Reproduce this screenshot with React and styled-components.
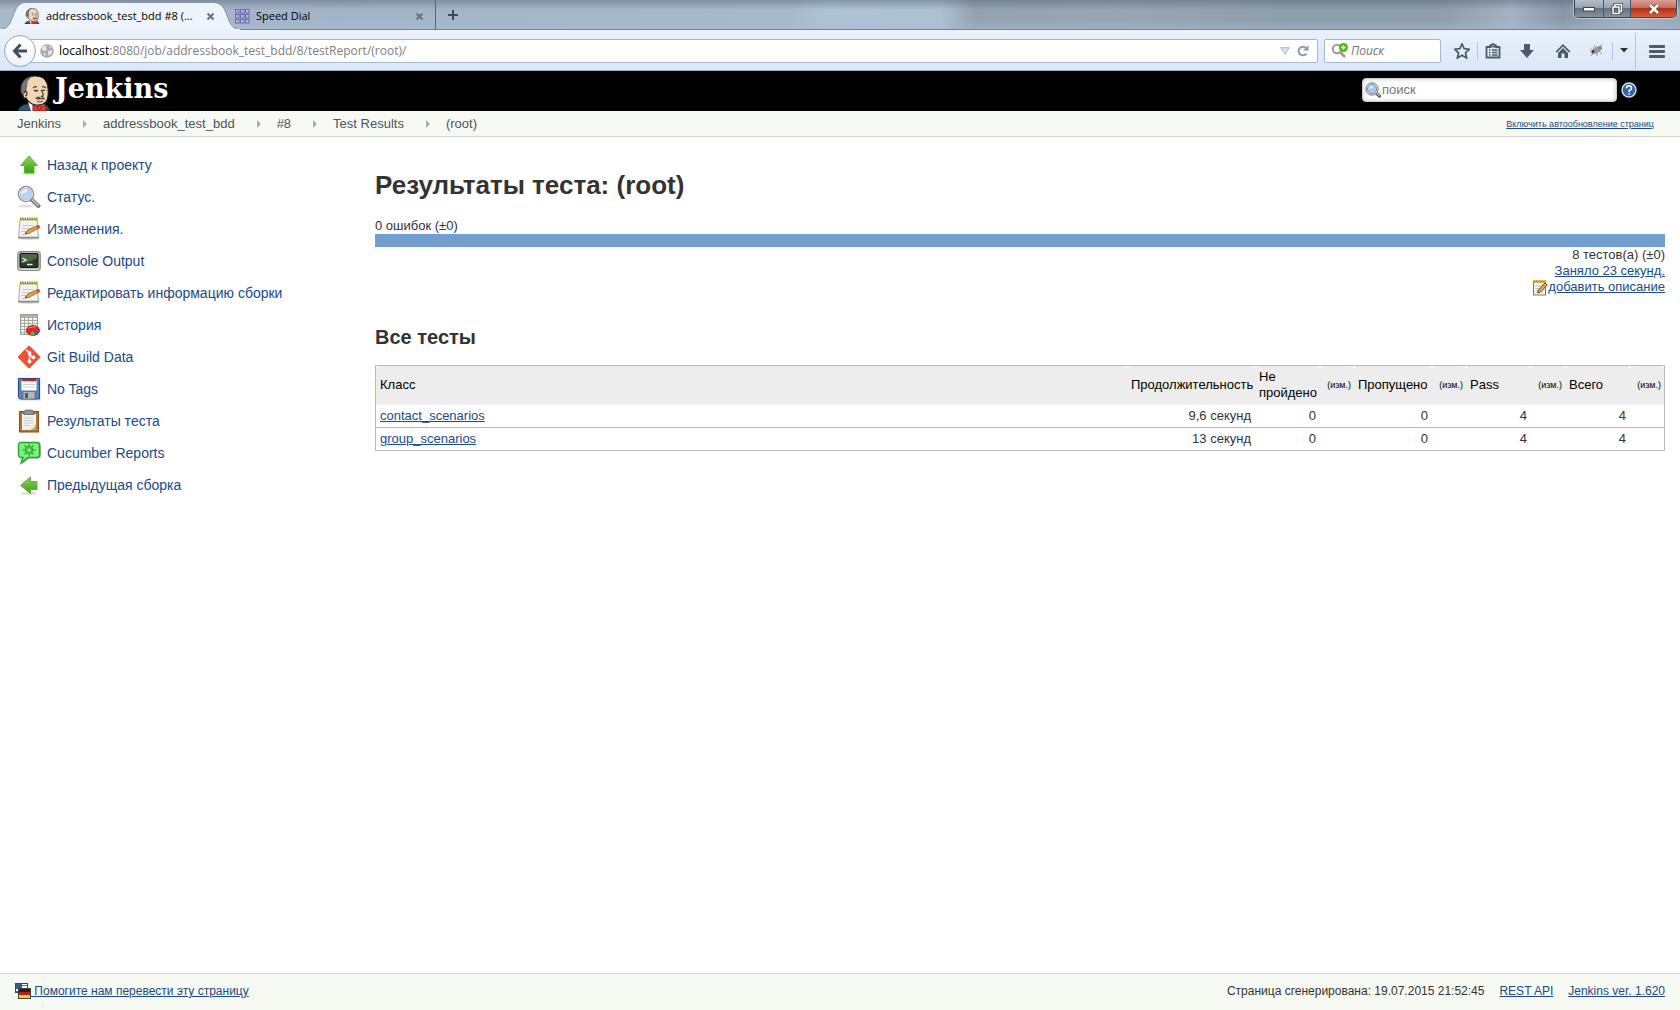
import React from 'react';
import styled, { createGlobalStyle } from 'styled-components';

const sans = '"Liberation Sans", Arial, sans-serif';
const ui = '"Open Sans", "Segoe UI", sans-serif';

const Global = createGlobalStyle`
  * { box-sizing: border-box; }
  body { margin: 0; background: #fff; color: #333; font: 12px/16px ${sans}; }
  button, input { font: inherit; }
`;

const Page = styled.div`
  min-height: 100vh;
  display: flex;
  flex-direction: column;
`;

/* ---------- browser window ---------- */
const TabStrip = styled.div`
  display: flex;
  height: 30px;
  border-bottom: 1px solid #6f8598;
  background:
    linear-gradient(180deg, rgba(70, 85, 100, 0.4) 0, rgba(120, 140, 160, 0) 10px, rgba(165, 188, 208, 0) 20px, rgba(165, 188, 208, 0.5) 30px),
    linear-gradient(90deg, #a9b9cb 0, #a3b4c8 20%, #a6b7ca 35%, #a7b9cd 47%, #afc2d5 49%, #adc1d4 56%, #93a2b1 58%, #97a6b5 66%, #8e9fae 76%, #8f9fae 86%, #a3b3c3 90%, #8998a8 93%, #a2b2c2 97%, #97a8b9 100%);
`;

const Tab = styled.div`
  position: relative;
  display: flex;
  align-items: center;
  gap: 6px;
  height: 30px;
  width: ${p => (p.$active ? '234px' : '202px')};
  padding: 2px ${p => (p.$active ? '16px 0 24px' : '8px 0 1px')};
  border-right: ${p => (p.$active ? '0' : '1px solid #54667a')};
  color: #000;
  font: 11px/16px ${ui};
  white-space: nowrap;
  & > * { position: relative; flex: none; }
`;

const TabTitle = styled.span`
  && { flex: 1; }
`;

const TabShape = styled.svg`
  && { position: absolute; left: 0; top: 0; }
`;

const PlainButton = styled.button`
  display: flex;
  align-items: center;
  justify-content: center;
  flex: none;
  width: ${p => p.$w || 16}px;
  height: ${p => p.$h || 16}px;
  padding: 0;
  border: 0;
  background: none;
`;

const WindowButtons = styled.div`
  display: flex;
  align-self: flex-start;
  margin-left: auto;
  margin-right: 3px;
  height: 18px;
  border: 1px solid #3c4650;
  border-top: 0;
  border-radius: 0 0 5px 5px;
  overflow: hidden;
  box-shadow: 0 0 0 1px rgba(255, 255, 255, 0.4);
`;

const WindowButton = styled(PlainButton)`
  height: 17px;
  background: ${p => (p.$close
    ? 'linear-gradient(#d9a196 0, #c4705f 45%, #b3301a 50%, #d5603f 100%)'
    : 'linear-gradient(#b5bec8 0, #97a3af 45%, #66727e 50%, #8793a0 100%)')};
  & + & { border-left: 1px solid #4a545e; }
`;

const NavBar = styled.div`
  display: flex;
  align-items: center;
  height: 41px;
  padding: 1px 2px 0 4px;
  border-bottom: 1px solid #9bb0c6;
  background: linear-gradient(#eaf1fb, #d9e7f8);
`;

const BackButton = styled(PlainButton)`
  position: relative;
  margin-right: -8px;
  border: 1px solid #92a8be;
  border-radius: 50%;
  background: linear-gradient(#fff, #eef4fb);
`;

const UrlBox = styled.div`
  display: flex;
  align-items: center;
  flex: 1;
  gap: 5px;
  height: 24px;
  padding: 0 6px 0 11px;
  border: 1px solid #a5b9cd;
  border-radius: 2px;
  background: #fff;
  color: #808080;
  font: 12px/16px ${ui};
  white-space: nowrap;
`;

const Address = styled.span`
  flex: 1;
  b { font-weight: 400; color: #000; }
`;

const BrowserSearch = styled.label`
  display: flex;
  align-items: center;
  gap: 2px;
  width: 117px;
  height: 24px;
  margin: 0 12px 0 6px;
  padding: 0 6px;
  border: 1px solid #a5b9cd;
  border-radius: 2px;
  background: #fff;
  input {
    min-width: 0;
    flex: 1;
    padding: 0;
    border: 0;
    outline: 0;
    background: none;
    font: italic 12px/16px ${ui};
  }
  input::placeholder { color: #757575; opacity: 1; }
`;

const Tools = styled.div`
  display: flex;
  align-items: center;
`;

const ToolSep = styled.span`
  width: 1px;
  height: ${p => (p.$tall ? 36 : 18)}px;
  margin-left: ${p => (p.$gap ? 6 : 0)}px;
  background: #b3c5d8;
`;

/* ---------- Jenkins header ---------- */
const Header = styled.header`
  display: flex;
  align-items: center;
  height: 40px;
  padding: 0 43px 2px 18px;
  background: #000;
`;

const Brand = styled.a`
  display: flex;
  align-items: center;
  gap: 5px;
  height: 40px;
  margin-bottom: -2px;
  color: #fff;
  font: bold 27px/32px "DejaVu Serif", Georgia, serif;
  text-decoration: none;
  svg { align-self: flex-end; }
  span { padding-bottom: 4px; }
`;

const SearchBox = styled.label`
  display: flex;
  align-items: center;
  width: 255px;
  height: 24px;
  margin: 0 4px 0 auto;
  padding: 0 2px;
  border: 1px solid #ccc;
  border-radius: 4px;
  background: #fff;
  box-shadow: inset 0 0 5px #ccc;
  input {
    min-width: 0;
    flex: 1;
    padding: 0;
    border: 0;
    outline: 0;
    background: none;
    font: 13px/16px ${sans};
  }
  input::placeholder { color: #757575; opacity: 1; }
`;

const Crumbs = styled.nav`
  display: flex;
  align-items: center;
  height: 26px;
  padding: 1px 26px 0 17px;
  border-bottom: 1px solid #d3d7cf;
  background: #f6faf2;
  font-size: 13px;
  a { color: #4d545d; text-decoration: none; }
`;

const CrumbArrow = styled.span`
  margin: 0 16px 0 22px;
  border: 4px solid transparent;
  border-right-width: 0;
  border-left-color: #aaa;
`;

const RefreshLink = styled.span`
  margin-left: auto;
  font-size: 9px;
  && a { color: #204a87; text-decoration: underline; }
`;

/* ---------- content ---------- */
const Body = styled.div`
  display: flex;
  flex: 1;
`;

const Side = styled.nav`
  display: flex;
  flex-direction: column;
  gap: 8px;
  flex: none;
  width: 375px;
  padding: 16px 17px;
`;

const Task = styled.a`
  display: flex;
  align-items: center;
  gap: 6px;
  height: 24px;
  color: #204a87;
  font-size: 14px;
  text-decoration: none;
`;

const Main = styled.main`
  flex: 1;
  padding: 32px 15px 32px 0;
  font-size: 13px;
`;

const Title = styled.h1`
  margin: 0 0 17px;
  font: bold 26px/32px ${sans};
`;

const Subtitle = styled.h2`
  margin: 30px 0 16px;
  font: bold 20px/24px ${sans};
`;

const Bar = styled.div`
  height: 13px;
  background: #729fcf;
`;

const Summary = styled.div`
  display: flex;
  flex-direction: column;
  align-items: flex-end;
`;

const Link = styled.a`
  color: #204a87;
`;

const Describe = styled.span`
  display: flex;
  align-items: center;
  height: 16px;
  svg { position: relative; top: 1px; }
`;

const Results = styled.table`
  width: 100%;
  border: 1px solid #bbb;
  border-collapse: separate;
  border-spacing: 0;
  table-layout: fixed;
  th, td { padding: 3px 4px; text-align: left; }
  th {
    height: 39px;
    border-bottom: 1px solid #f6f6f6;
    border-radius: 4px 4px 0 0;
    background: #ededed;
    color: #000;
    font-weight: 400;
  }
  td { height: 22px; }
  tr + tr td { height: 23px; border-top: 1px solid #bbb; }
`;

const Col = styled.col`
  width: ${p => (p.$w ? `${p.$w}px` : 'auto')};
`;

const Head = styled.th`
  && {
    padding: 3px ${p => (p.$small ? 3 : 4)}px;
    text-align: ${p => (p.$right ? 'right' : 'left')};
    font-size: ${p => (p.$small ? 9 : 13)}px;
    white-space: ${p => (p.$wrap ? 'normal' : 'nowrap')};
  }
`;

const Num = styled.td`
  && { text-align: right; }
`;

const Footer = styled.footer`
  display: flex;
  align-items: center;
  gap: 15px;
  height: 37px;
  padding: 0 15px 2px;
  border-top: 1px solid #d3d7cf;
  background: #f6faf2;
`;

const Translate = styled(Link)`
  display: flex;
  align-items: center;
  margin-right: auto;
  white-space: pre;
`;

/* ---------- drawings ---------- */
const Butler = ({ w, h }) => (
  <svg width={w} height={h} viewBox="0 0 32 36">
    <path d="M0 36 L1 33 Q5 29 10 29 L24 29 Q31 30 32 36Z" fill="#31586e" stroke="#182a35" />
    <path d="M10 27 L13 36 H27 L26 28Z" fill="#fff" />
    <path d="M5 20 Q2 19 3 13 Q5 1 17 1 Q29 1 30 13 Q31 23 28 27 Q24 31 18 30 Q11 29 8 23 Q5 24 5 20Z" fill="#f0d6b7" stroke="#231f20" strokeWidth="1.2" />
    <path d="M3 15 Q2 5 13 1.500 Q8 6 8.500 10 Q9.500 11 8 13 Q8.500 15 7 18 L4 19Z" fill="#777577" stroke="#333" strokeWidth=".6" />
    <path d="M6 17 Q8.500 15 9 18 Q9 21 7 21 M15 13 q2-2 4 -1 M24 12 q2-1 4 1 M16 15 q2 2 4 0 M24 15 q2 1 3 0 M23 15 q3 4 2 6 q-1 1-2 0" fill="none" stroke="#49352b" strokeWidth="1.200" />
    <path d="M17 23 q4-3 6 0 q3-2 4 1 q-2 1-4 0 q-3 2-6-1Z" fill="#5b524b" />
    <path d="M19 26 q3 2 6 0" fill="none" stroke="#8c3b2c" />
    <path d="M15 30 L21 32 L28 30 V36 H15Z" fill="#e03a35" stroke="#861c18" />
    <circle cx="21.500" cy="33" r="2" fill="#ef3d3a" stroke="#861c18" strokeWidth=".8" />
  </svg>
);

const Glass = ({ s = 24 }) => (
  <svg width={s} height={s} viewBox="0 0 24 24">
    <ellipse cx="9" cy="21" rx="8" ry="1.6" fill="#000" opacity=".12" />
    <path d="M14 14 L21.500 21" stroke="#777" strokeWidth="4" strokeLinecap="round" />
    <path d="M15 14.500 L21 20.200" stroke="#c8c8c8" strokeWidth="1.600" strokeLinecap="round" />
    <circle cx="9" cy="9" r="7.200" fill="#b9d3f2" stroke="#8c8f8c" strokeWidth="2.200" />
    <circle cx="9" cy="9" r="6.500" fill="none" stroke="#eee" strokeWidth="1" />
    <path d="M4 9 Q5 4 10 4 Q12 7 4 9Z" fill="#e8f2fd" />
  </svg>
);

const SmallGlass = () => (
  <svg width="17" height="16" viewBox="0 0 17 16">
    <path d="M11 11 L14.500 14" stroke="#666" strokeWidth="3.500" strokeLinecap="round" />
    <path d="M11.500 11 L14.500 13.500" stroke="#bbb" strokeWidth="1.200" strokeLinecap="round" />
    <circle cx="7" cy="7" r="6.200" fill="#eee" stroke="#777" />
    <circle cx="7" cy="7" r="4.600" fill="#a9c8ef" stroke="#6f93c4" />
    <path d="M3.500 7 Q4 3.500 8 3.500 Q9 6 3.500 7Z" fill="#e3effc" />
  </svg>
);

const Arrow = ({ left }) => (
  <svg width="24" height="24" viewBox="0 0 24 24">
    <defs>
      <linearGradient id={left ? 'gl' : 'gu'} x1="0" y1="0" x2="0" y2="1">
        <stop offset="0" stopColor="#8fd35c" /><stop offset="1" stopColor="#3f9d10" />
      </linearGradient>
    </defs>
    <ellipse cx="12" cy="20.500" rx="8" ry="1.500" fill="#000" opacity=".14" />
    {left
      ? <path d="M3.500 12.500 L13.500 4 V8.500 H20 V16.500 H13.500 V20.500Z" fill="url(#gl)" stroke="#64ad39" />
      : <path d="M12 3 L20.500 12.500 H17 V20 H7.500 V12.500 H3.500Z" fill="url(#gu)" stroke="#5bbd27" />}
  </svg>
);

const Notepad = () => (
  <svg width="24" height="24" viewBox="0 0 24 24">
    <ellipse cx="12" cy="21.500" rx="11" ry="1.500" fill="#000" opacity=".15" />
    <path d="M3 2.500 H20 L21.500 21 H1.500Z" fill="#f4f4f2" stroke="#aaa9a5" />
    <path d="M1.500 20.500 H21.500" stroke="#8a8a86" strokeWidth="1.500" />
    <path d="M3 2 H20.500" stroke="#9f8a22" strokeWidth="3" strokeDasharray="1.500 .8" />
    <path d="M5 8.500 H17 M5 11.500 H16 M4 14.500 H9 M4 17.500 H8" stroke="#c9c9c6" />
    <path d="M8 17 L10 13.500 L20.500 8.500 L22 11 L11.500 16.500Z" fill="#e3a04c" stroke="#8f5a1d" strokeWidth=".8" />
    <path d="M19.500 9 L22 8 L23.300 10.300 L21 11.500Z" fill="#d8432f" />
    <path d="M8 17 L8.900 15.500 L10 16.700Z" fill="#222" />
  </svg>
);

const SmallNotepad = () => (
  <svg width="16" height="16" viewBox="0 0 16 16">
    <rect x="1.500" y="1.500" width="12" height="13.500" fill="#f2f2f0" stroke="#777773" />
    <path d="M1.500 1.500 H14" stroke="#c9a51c" strokeWidth="3" strokeDasharray="2 .7" />
    <path d="M3.500 6 H11 M3.500 8.500 H9 M3.500 11 H6" stroke="#bdbdba" />
    <path d="M5.500 13 L6.500 10 L13 3 L15.300 5 L8.500 12Z" fill="#e8a84f" stroke="#6d4412" />
  </svg>
);

const Console = () => (
  <svg width="24" height="24" viewBox="0 0 24 24">
    <rect x=".7" y="2.500" width="22.600" height="19" rx="2" fill="#b9bab5" stroke="#878984" />
    <rect x="3" y="4.500" width="18" height="14" rx="1" fill="#2a3b25" stroke="#11180f" />
    <path d="M4 5 H20 V9 Q12 14 4 14Z" fill="#5b7852" opacity=".75" />
    <path d="M5.500 9 L9 11 L5.500 13 M10 15.500 H15.500" fill="none" stroke="#e5f0df" strokeWidth="1.300" />
    <path d="M3 20.300 H21" stroke="#e4e4e0" />
  </svg>
);

const History = () => (
  <svg width="24" height="24" viewBox="0 0 24 24">
    <rect x="3.500" y="1.500" width="17" height="20" fill="#f3f3f1" stroke="#9a9a97" />
    <path d="M4 3.500 H20" stroke="#b3b3b0" strokeWidth="3" />
    <path d="M4 7.500 H20 M4 10.500 H20 M4 13.500 H20 M4 16.500 H20 M4 19.500 H12 M7.500 2 V21 M11.500 2 V21 M15.500 2 V12" stroke="#a9a9a6" strokeWidth="1" />
    <ellipse cx="16" cy="17.500" rx="6.500" ry="5" fill="#dc2b20" stroke="#8e1610" strokeWidth=".8" />
    <path d="M12 15 Q15 13 19 14" stroke="#ff8e80" fill="none" />
    <path d="M16 17.500 L22 18.500 Q21 22 16 22.500Z" fill="#3465a4" />
    <path d="M16 17.500 L18 22.300 Q14 23 13 21Z" fill="#73a832" />
  </svg>
);

const Git = () => (
  <svg width="24" height="24" viewBox="0 0 24 24">
    <rect x="3.700" y="3.700" width="16.600" height="16.600" rx="1.500" fill="#f05133" transform="rotate(45 12 12)" />
    <path d="M9 4.500 L12.500 8 V17 M12.500 9 L16 12.500" stroke="#fff" strokeWidth="1.500" fill="none" />
    <circle cx="12.500" cy="8" r="1.900" fill="#fff" /><circle cx="12.500" cy="16.500" r="1.900" fill="#fff" /><circle cx="16.300" cy="12.300" r="1.900" fill="#fff" />
  </svg>
);

const Floppy = () => (
  <svg width="24" height="24" viewBox="0 0 24 24">
    <rect width="24" height="24" fill="#ebebeb" />
    <path d="M1.500 1.500 H22.500 V22 H3 L1.500 20.500Z" fill="#5a82bd" stroke="#2c4c80" />
    <rect x="4.500" y="2" width="15" height="11.500" fill="#fff" />
    <path d="M4.500 3 H19.500" stroke="#d81a12" strokeWidth="2.200" />
    <path d="M6 7.500 H18 M6 10 H18" stroke="#ccc" />
    <rect x="6" y="14.500" width="12" height="7.500" fill="#b4b6b2" stroke="#5d6878" strokeWidth=".7" />
    <rect x="8" y="16" width="3" height="5" fill="#3d5c8c" />
  </svg>
);

const Clipboard = () => (
  <svg width="24" height="24" viewBox="0 0 24 24">
    <rect x="2.500" y="2.500" width="19" height="20.500" fill="#b0772c" stroke="#80511a" />
    <rect x="5" y="5" width="14" height="16" fill="#f1f1ef" />
    <path d="M7 3.500 Q7 1 10 1 H14 Q17 1 17 3.500 V5.500 H7Z" fill="#93958f" stroke="#5f615c" strokeWidth=".8" />
    <path d="M7 9 H16 M7 11.500 H16 M7 14 H16 M7 16.500 H13" stroke="#cfcfcc" />
    <path d="M19 16 L14 21 H19Z" fill="#aaa" /><path d="M14 21 L15 17 L19 16Z" fill="#fff" stroke="#bbb" strokeWidth=".5" />
  </svg>
);

const Cucumber = () => (
  <svg width="24" height="24" viewBox="0 0 24 24">
    <path d="M5 2.500 H21 Q24 2.500 24 5.500 V14.500 Q24 17.500 21 17.500 H12 L5 23.500 L6.500 17.500 Q2 17.500 2 14.500Z" fill="#555" opacity=".5" />
    <path d="M4 1.500 H20 Q22.500 1.500 22.500 4 V14 Q22.500 16.500 20 16.500 H11 L4 22 L6 16.500 H4 Q1.500 16.500 1.500 14 V4 Q1.500 1.500 4 1.500Z" fill="#7df27b" stroke="#23a52b" strokeWidth="1.400" />
    <g stroke="#3aa63f" strokeWidth="1.300"><path d="M12 2.800 V15.200 M5.500 9 H18.500 M7.500 4.500 L16.500 13.500 M16.500 4.500 L7.500 13.500" /></g>
    <circle cx="12" cy="9" r="3.800" fill="#4cc44c" stroke="#3aa63f" />
    <circle cx="12" cy="9" r="1.500" fill="#8ff58a" />
  </svg>
);

const Flags = () => (
  <svg width="16" height="16" viewBox="0 0 16 16">
    <rect x=".5" y=".5" width="12" height="9" fill="#fff" stroke="#444" />
    <path d="M1 2.500 H12 M1 5.500 H12 M1 8.500 H12" stroke="#c8433a" />
    <rect x="1" y="1" width="6" height="5" fill="#2e5c9a" />
    <rect x="3.500" y="5.500" width="12" height="10" fill="#222" stroke="#444" />
    <rect x="4" y="9" width="11" height="3" fill="#c91a1a" /><rect x="4" y="12" width="11" height="3" fill="#f2d53c" />
  </svg>
);

const Cross = () => (
  <svg width="9" height="9" viewBox="0 0 9 9"><path d="M1.500 1.500 L7.500 7.500 M7.500 1.500 L1.500 7.500" stroke="#66727f" strokeWidth="2" /></svg>
);

const Globe = () => (
  <svg width="14" height="14" viewBox="0 0 14 14">
    <circle cx="7" cy="7" r="6.800" fill="#a9a9a9" />
    <path d="M2 3 Q5 1 7 2 L6 4 L7 6 L4 7 L2 6Z M8 7 L12 6 L12 9 L9 12 L8 10Z M9 1.500 L12 4 L10 4.500Z M3 9 L5 9 L6 12 L4 11Z" fill="#e6e6e6" />
  </svg>
);

const ink = '#4c5a69';
const toolIcons = {
  star: <path d="M8 .9 L10.200 5.700 L15.300 6.200 L11.500 9.800 L12.600 15 L8 12.300 L3.400 15 L4.500 9.800 L.7 6.200 L5.800 5.700Z" fill="none" stroke={ink} strokeWidth="1.700" />,
  list: <g fill="none" stroke={ink} strokeWidth="1.800"><path d="M1.500 4 H5 V2.500 L8 1 L11 2.500 V4 H14.500 V14.500 H1.500Z" /><path d="M4 7 H5.500 M7 7 H12.500 M4 9.500 H5.500 M7 9.500 H12.500 M4 12 H5.500 M7 12 H12.500" strokeWidth="1.300" /><path d="M5 3.500 H11" /></g>,
  down: <path d="M5 1 H11 V7 H15 L8 15 L1 7 H5Z" fill={ink} />,
  home: <g fill={ink}><path d="M8 1 L15.500 8.500 L14.300 9.700 L8 3.500 L1.700 9.700 L.5 8.500Z" /><path d="M8 5 L13 10 V15 H9.500 V10.500 H6.500 V15 H3 V10Z" /></g>,
  fly: <g><path d="M0 7 Q5 2 9 5 L5 9Z" fill="#d2d2d2" /><path d="M3 9 Q7 3 12 3 Q15 5 12 8 Q8 12 4 11Z" fill="#999" /><circle cx="12" cy="5" r="2" fill="#888" /><circle cx="5" cy="8.500" r="1.500" fill="#333" /><path d="M6 9 L3 13 M9 9 L9 13 M11 8 L14 11 M8 5 L6 2 M12 4 L14 1" stroke="#888" strokeWidth=".8" /></g>,
  menu: <g fill={ink}><rect y="2" width="16" height="3" rx="1" /><rect y="7" width="16" height="3" rx="1" /><rect y="12" width="16" height="3" rx="1" /></g>,
};

const ToolIcon = ({ name, w = 36 }) => (
  <PlainButton $w={w} $h={24} aria-label={name}>
    <svg width="16" height="16" viewBox="0 0 16 16">{toolIcons[name]}</svg>
  </PlainButton>
);

/* ---------- data ---------- */
const tasks = [
  [<Arrow />, 'Назад к проекту'],
  [<Glass />, 'Статус.'],
  [<Notepad />, 'Изменения.'],
  [<Console />, 'Console Output'],
  [<Notepad />, 'Редактировать информацию сборки'],
  [<History />, 'История'],
  [<Git />, 'Git Build Data'],
  [<Floppy />, 'No Tags'],
  [<Clipboard />, 'Результаты теста'],
  [<Cucumber />, 'Cucumber Reports'],
  [<Arrow left />, 'Предыдущая сборка'],
];

const crumbs = ['Jenkins', 'addressbook_test_bdd', '#8', 'Test Results', '(root)'];

const rows = [
  ['contact_scenarios', '9,6 секунд', '0', '', '0', '', '4', '', '4', ''],
  ['group_scenarios', '13 секунд', '0', '', '0', '', '4', '', '4', ''],
];

const grid = [...Array(9).keys()].map(i => <rect key={i} x={(i % 3) * 5 + 0.5} y={Math.floor(i / 3) * 5 + 0.5} width="3.500" height="3.500" fill="#b9b9e0" stroke="#6b69b5" />);

export default function App() {
  return (
    <Page>
      <Global />
      <TabStrip>
        <Tab $active>
          <TabShape width="240" height="30" viewBox="0 0 240 30">
            <path d="M0 29.500 C16 29.500 10 2.500 26 2.500 H213 C231 2.500 224 29.500 240 29.500 V30 H0Z" fill="#eef4fc" stroke="#8496a8" />
            <path d="M0 30 H240" stroke="#eaf1fb" strokeWidth="2" />
          </TabShape>
          <Butler w={16} h={16} />
          <TabTitle>addressbook_test_bdd #8 (...</TabTitle>
          <PlainButton aria-label="Закрыть вкладку"><Cross /></PlainButton>
        </Tab>
        <Tab>
          <svg width="15" height="15" viewBox="0 0 15 15">{grid}</svg>
          <TabTitle>Speed Dial</TabTitle>
          <PlainButton aria-label="Закрыть вкладку"><Cross /></PlainButton>
        </Tab>
        <PlainButton $w={34} $h={30} aria-label="Новая вкладка">
          <svg width="10" height="10" viewBox="0 0 10 10"><path d="M5 0 V10 M0 5 H10" stroke="#3c4957" strokeWidth="2" /></svg>
        </PlainButton>
        <WindowButtons>
          <WindowButton $w={28} aria-label="Свернуть"><svg width="12" height="6"><rect x=".5" y="1.500" width="11" height="3.500" fill="#fff" stroke="#444" /></svg></WindowButton>
          <WindowButton $w={27} aria-label="Окно"><svg width="12" height="12" viewBox="0 0 12 12"><path d="M4 3.500 V1.500 H10.500 V8.500 H8.500 M2 4 H8 V10.500 H2Z" fill="none" stroke="#444" strokeWidth="3" /><path d="M4 3.500 V1.500 H10.500 V8.500 H8.500 M2 4 H8 V10.500 H2Z" fill="none" stroke="#fff" strokeWidth="1.500" /></svg></WindowButton>
          <WindowButton $w={46} $close aria-label="Закрыть"><svg width="12" height="10" viewBox="0 0 12 10"><path d="M2 1 L10 9 M10 1 L2 9" stroke="#543" strokeWidth="4" /><path d="M2 1 L10 9 M10 1 L2 9" stroke="#fff" strokeWidth="2.500" /></svg></WindowButton>
        </WindowButtons>
      </TabStrip>

      <NavBar>
        <BackButton $w={32} $h={32} aria-label="Назад">
          <svg width="16" height="16" viewBox="0 0 16 16"><path d="M8.500 1.500 L2.500 8 L8.500 14.500 M3 8 H15" fill="none" stroke="#434f5b" strokeWidth="3" /></svg>
        </BackButton>
        <UrlBox>
          <Globe />
          <Address><b>localhost</b>:8080/job/addressbook_test_bdd/8/testReport/(root)/</Address>
          <svg width="10" height="8" viewBox="0 0 10 8"><path d="M.7 .7 H9.300 L5 7Z" fill="#dfe5ec" stroke="#a9b6c4" /></svg>
          <PlainButton aria-label="Обновить">
            <svg width="12" height="12" viewBox="0 0 12 12"><path d="M9.500 8.500 A4.300 4.300 0 1 1 9 3" fill="none" stroke="#8c9aab" strokeWidth="2" /><path d="M11.500 0 V5.500 H6Z" fill="#8c9aab" /></svg>
          </PlainButton>
        </UrlBox>
        <BrowserSearch>
          <svg width="18" height="16" viewBox="0 0 18 16">
            <circle cx="6" cy="6" r="4.200" fill="none" stroke="#9a9a9a" strokeWidth="2" />
            <path d="M9 9 L14 14" stroke="#9a9a9a" strokeWidth="2.500" />
            <circle cx="12.500" cy="4.500" r="4.500" fill="#4db51f" /><path d="M12.500 2 V7 M10 4.500 H15" stroke="#fff" strokeWidth="1.300" />
          </svg>
          <input placeholder="Поиск" aria-label="Поиск" />
        </BrowserSearch>
        <Tools>
          <ToolIcon name="star" w={18} />
          <ToolSep $gap />
          <ToolIcon name="list" w={30} />
          <ToolIcon name="down" w={38} />
          <ToolIcon name="home" w={34} />
          <ToolIcon name="fly" w={32} />
          <ToolSep />
          <PlainButton $w={22} $h={24} aria-label="Ещё"><svg width="8" height="5"><path d="M0 0 H8 L4 4.500Z" fill="#333" /></svg></PlainButton>
          <ToolSep $tall />
          <ToolIcon name="menu" w={42} />
        </Tools>
      </NavBar>

      <Header>
        <Brand href="#"><Butler w={32} h={36} /><span>Jenkins</span></Brand>
        <SearchBox><SmallGlass /><input placeholder="поиск" aria-label="поиск" /></SearchBox>
        <a href="#help" aria-label="Помощь">
          <svg width="16" height="16" viewBox="0 0 16 16" display="block">
            <circle cx="8" cy="8" r="7" fill="#3465a4" stroke="#d6e0ee" strokeWidth="1.400" />
            <path d="M5.500 6.200 Q5.500 3.800 8 3.800 Q10.500 3.800 10.500 6 Q10.500 7.300 8.200 8.700 V10 M8.200 11 V12.600" fill="none" stroke="#fff" strokeWidth="1.600" />
          </svg>
        </a>
      </Header>

      <Crumbs>
        {crumbs.map((c, i) => (
          <React.Fragment key={c}>
            {i > 0 && <CrumbArrow />}
            <a href="#">{c}</a>
          </React.Fragment>
        ))}
        <RefreshLink><a href="#">Включить автообновление страниц</a></RefreshLink>
      </Crumbs>

      <Body>
        <Side>
          {tasks.map(([icon, label]) => <Task href="#" key={label}>{icon}{label}</Task>)}
        </Side>
        <Main>
          <Title>Результаты теста: (root)</Title>
          <div>0 ошибок (±0)</div>
          <Bar />
          <Summary>
            <span>8 тестов(а) (±0)</span>
            <Link href="#">Заняло 23 секунд.</Link>
            <Describe><SmallNotepad /><Link href="#">добавить описание</Link></Describe>
          </Summary>
          <Subtitle>Все тесты</Subtitle>
          <Results>
            <colgroup>
              {[0, 128, 65, 34, 78, 34, 65, 34, 65, 34].map((w, i) => <Col key={i} $w={w} />)}
            </colgroup>
            <thead>
              <tr>
                <Head>Класс</Head>
                <Head $right>Продолжительность</Head>
                <Head $wrap>Не пройдено</Head>
                <Head $right $small>(изм.)</Head>
                <Head>Пропущено</Head>
                <Head $right $small>(изм.)</Head>
                <Head>Pass</Head>
                <Head $right $small>(изм.)</Head>
                <Head>Всего</Head>
                <Head $right $small>(изм.)</Head>
              </tr>
            </thead>
            <tbody>
              {rows.map(([name, ...cells]) => (
                <tr key={name}>
                  <td><Link href="#">{name}</Link></td>
                  {cells.map((c, i) => <Num key={i}>{c}</Num>)}
                </tr>
              ))}
            </tbody>
          </Results>
        </Main>
      </Body>

      <Footer>
        <Translate href="#"><Flags /> Помогите нам перевести эту страницу</Translate>
        <span>Страница сгенерирована: 19.07.2015 21:52:45</span>
        <Link href="#">REST API</Link>
        <Link href="#">Jenkins ver. 1.620</Link>
      </Footer>
    </Page>
  );
}
